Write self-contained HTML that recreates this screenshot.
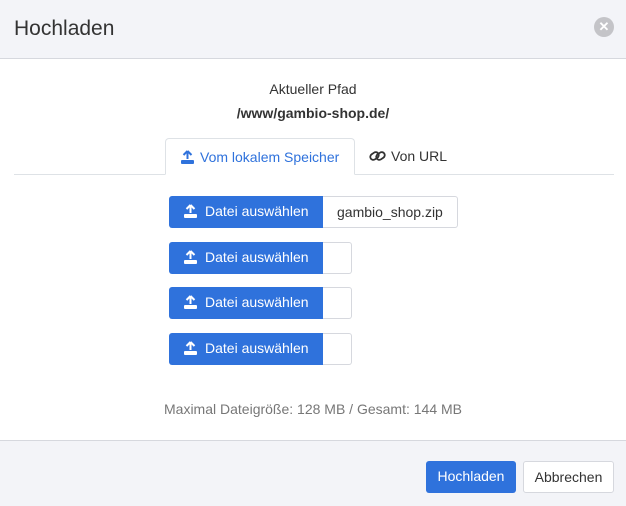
<!DOCTYPE html>
<html><head><style>
*{box-sizing:border-box;margin:0;padding:0}
body{width:626px;height:506px;font-family:"Liberation Sans",sans-serif;color:#333;background:#fff;position:relative;overflow:hidden;font-size:14px}
.hdr{position:absolute;left:0;top:0;width:626px;height:59px;background:#f3f4f8;border-bottom:1px solid #d6d8de}
.hdr h1{position:absolute;left:14px;top:17px;font-size:21px;font-weight:normal;color:#333}
.x{position:absolute;left:594px;top:17px;width:20px;height:20px;border-radius:50%;background:#c4c4c8;color:#fff;font-size:13px;font-weight:bold;text-align:center;line-height:20px}
.t{position:absolute;left:0;width:626px;text-align:center}
.tabline{position:absolute;left:14px;top:174px;width:600px;height:1px;background:#dee2e6}
.tab{position:absolute;top:138px;height:37px;line-height:36px;font-size:14px;padding:0 14px;white-space:nowrap}
.tab.a{left:165px;width:190px;border:1px solid #dee2e6;border-bottom:1px solid #fff;border-radius:4px 4px 0 0;background:#fff;color:#2f72dc}
.tab.b{left:355px;color:#333}
.row{position:absolute;left:169px;height:32px;display:flex}
.btn{width:154px;height:32px;background:#2f72dc;color:#fff;border-radius:3px 0 0 3px;line-height:31px;padding-left:14px;font-size:14px;white-space:nowrap}
.inp{height:32px;border:1px solid #d6d8de;border-left:none;border-radius:0 3px 3px 0;line-height:30px;padding:0 14px;font-size:14px;color:#333}
svg{vertical-align:-2px;margin-right:7px}
.tab svg{margin-right:5px}
.ftr{position:absolute;left:0;top:440px;width:626px;height:66px;background:#f3f4f8;border-top:1px solid #d6d8de}
.fb{position:absolute;top:461px;height:32px;border-radius:3px;line-height:30px;text-align:center;font-size:14px}
</style></head><body>
<div class="hdr"><h1>Hochladen</h1><div class="x">✕</div></div>
<div class="t" style="top:81px">Aktueller Pfad</div>
<div class="t" style="top:105px;font-weight:bold">/www/gambio-shop.de/</div>
<div class="tabline"></div>
<div class="tab a"><svg width="15" height="14" viewBox="0 0 15 14"><path d="M7.5 1 L3.5 5 M7.5 1 L11.5 5 M7.5 1 V9" stroke="#2f72dc" stroke-width="2" fill="none"/><rect x="1" y="10" width="13" height="4" rx="1" fill="#2f72dc"/></svg>Vom lokalem Speicher</div>
<div class="tab b"><svg width="17" height="14" viewBox="0 0 17 14"><g fill="none" stroke="#333" stroke-width="1.8"><rect x="1" y="4" width="9" height="6" rx="3" transform="rotate(-35 5.5 7)"/><rect x="7" y="4" width="9" height="6" rx="3" transform="rotate(-35 11.5 7)"/></g></svg>Von URL</div>
<div class="row" style="top:196px"><div class="btn"><svg width="15" height="14" viewBox="0 0 15 14"><path d="M7.5 1 L3.5 5 M7.5 1 L11.5 5 M7.5 1 V9" stroke="#fff" stroke-width="2" fill="none"/><rect x="1" y="10" width="13" height="4" rx="1" fill="#fff"/></svg>Datei auswählen</div><div class="inp" style="width:135px">gambio_shop.zip</div></div>
<div class="row" style="top:242px"><div class="btn"><svg width="15" height="14" viewBox="0 0 15 14"><path d="M7.5 1 L3.5 5 M7.5 1 L11.5 5 M7.5 1 V9" stroke="#fff" stroke-width="2" fill="none"/><rect x="1" y="10" width="13" height="4" rx="1" fill="#fff"/></svg>Datei auswählen</div><div class="inp" style="width:29px"></div></div>
<div class="row" style="top:287px"><div class="btn"><svg width="15" height="14" viewBox="0 0 15 14"><path d="M7.5 1 L3.5 5 M7.5 1 L11.5 5 M7.5 1 V9" stroke="#fff" stroke-width="2" fill="none"/><rect x="1" y="10" width="13" height="4" rx="1" fill="#fff"/></svg>Datei auswählen</div><div class="inp" style="width:29px"></div></div>
<div class="row" style="top:333px"><div class="btn"><svg width="15" height="14" viewBox="0 0 15 14"><path d="M7.5 1 L3.5 5 M7.5 1 L11.5 5 M7.5 1 V9" stroke="#fff" stroke-width="2" fill="none"/><rect x="1" y="10" width="13" height="4" rx="1" fill="#fff"/></svg>Datei auswählen</div><div class="inp" style="width:29px"></div></div>
<div class="t" style="top:401px;color:#777">Maximal Dateigröße: 128 MB / Gesamt: 144 MB</div>
<div class="ftr"></div>
<div class="fb" style="left:426px;width:90px;background:#2f72dc;color:#fff">Hochladen</div>
<div class="fb" style="left:523px;width:91px;background:#fff;border:1px solid #d6d8de;color:#333">Abbrechen</div>
</body></html>
